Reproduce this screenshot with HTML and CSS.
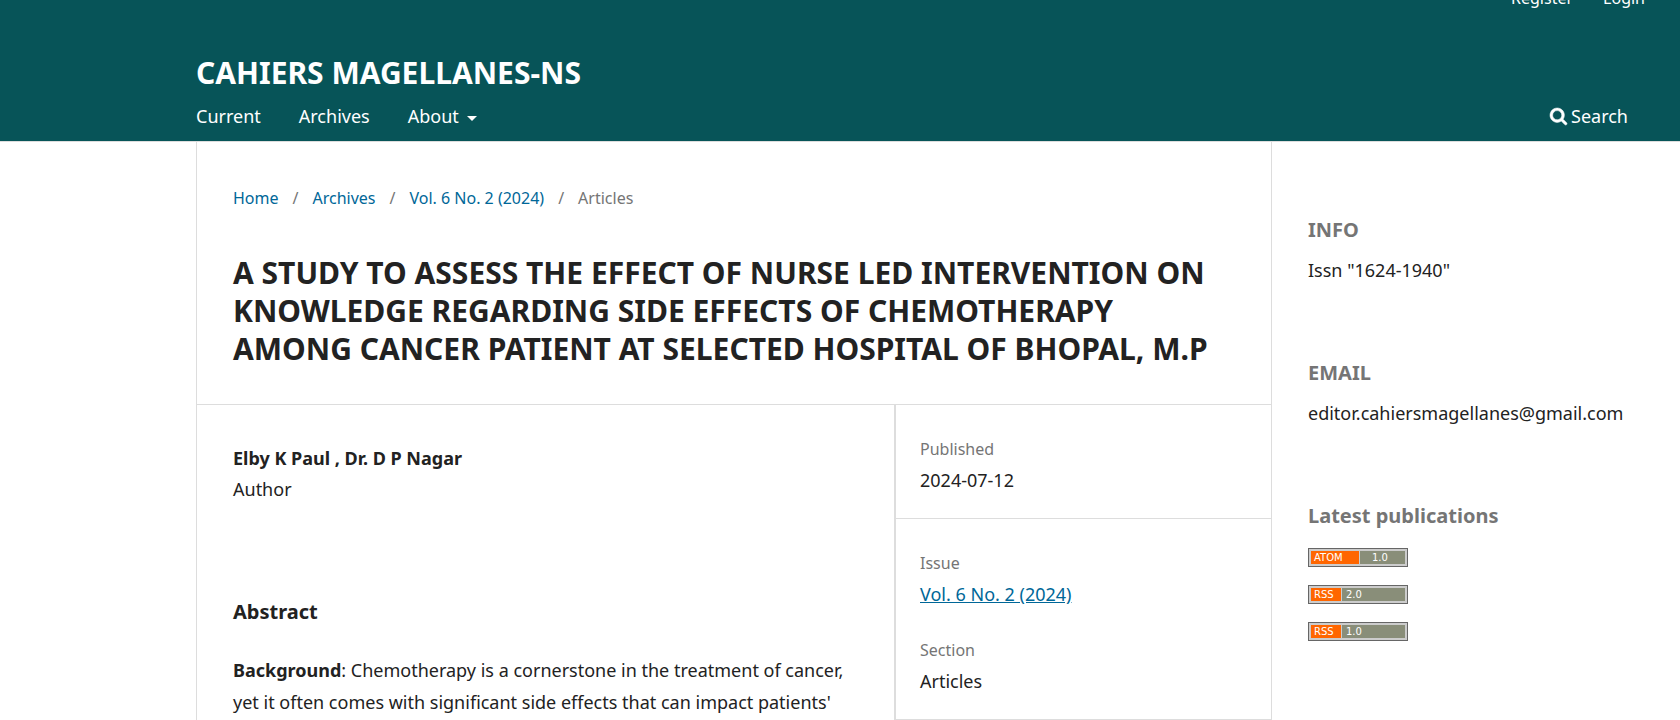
FILE: index.html
```html
<!DOCTYPE html>
<html lang="en">
<head>
<meta charset="utf-8">
<meta name="viewport" content="width=device-width, initial-scale=1">
<title>Cahiers Magellanes-NS</title>
<link rel="stylesheet" href="styles.css">
</head>
<body>
<header class="site-header">
  <nav class="user-nav" aria-label="User">
    <a href="#">Register</a>
    <a href="#">Login</a>
  </nav>
  <div class="site-name"><a href="#">CAHIERS MAGELLANES-NS</a></div>
  <div class="nav-row">
    <nav class="primary-nav" aria-label="Site">
      <a href="#">Current</a>
      <a href="#">Archives</a>
      <a href="#" class="has-menu">About</a>
    </nav>
    <a href="#" class="search-link">
      <svg class="search-icon" viewBox="0 0 1664 1664" aria-hidden="true"><path fill="currentColor" stroke="currentColor" stroke-width="50" d="M1152 704q0-185-131.500-316.500T704 256 387.500 387.500 256 704t131.500 316.500T704 1152t316.500-131.500T1152 704zm512 832q0 52-38 90t-90 38q-54 0-90-38l-343-342q-179 124-399 124-143 0-273.500-55.500t-225-150-150-225T0 704t55.500-273.500 150-225 225-150T704 0t273.500 55.500 225 150 150 225T1408 704q0 220-124 399l343 343q37 37 37 90z"/></svg>
      Search
    </a>
  </div>
</header>
<div class="content">
  <main class="article">
    <div class="article-head">
      <nav class="breadcrumbs" aria-label="Breadcrumb">
        <a href="#">Home</a><span>/</span><a href="#">Archives</a><span>/</span><a href="#">Vol. 6 No. 2 (2024)</a><span>/</span><span>Articles</span>
      </nav>
      <h1>A STUDY TO ASSESS THE EFFECT OF NURSE LED INTERVENTION ON KNOWLEDGE REGARDING SIDE EFFECTS OF CHEMOTHERAPY AMONG CANCER PATIENT AT SELECTED HOSPITAL OF BHOPAL, M.P</h1>
    </div>
    <div class="article-row">
      <div class="article-main">
        <div class="authors">
          <strong>Elby K Paul , Dr. D P Nagar</strong>
          <span>Author</span>
        </div>
        <section class="abstract">
          <h2>Abstract</h2>
          <p><strong>Background</strong>: Chemotherapy is a cornerstone in the treatment of cancer, yet it often comes with significant side effects that can impact patients'</p>
        </section>
      </div>
      <div class="details">
        <section class="detail-box">
          <div class="detail">
            <h2>Published</h2>
            <div>2024-07-12</div>
          </div>
        </section>
        <section class="detail-box">
          <div class="detail">
            <h2>Issue</h2>
            <a href="#">Vol. 6 No. 2 (2024)</a>
          </div>
          <div class="detail">
            <h2>Section</h2>
            <div>Articles</div>
          </div>
        </section>
      </div>
    </div>
  </main>
  <aside class="sidebar">
    <section class="block">
      <h2>INFO</h2>
      <p>Issn "1624-1940"</p>
    </section>
    <section class="block">
      <h2>EMAIL</h2>
      <p>editor.cahiersmagellanes@gmail.com</p>
    </section>
    <section class="block">
      <h2>Latest publications</h2>
      <div class="feeds">
        <a href="#" class="feed feed-atom"><span class="feed-type">ATOM</span><span class="feed-version">1.0</span></a>
        <a href="#" class="feed"><span class="feed-type">RSS</span><span class="feed-version">2.0</span></a>
        <a href="#" class="feed"><span class="feed-type">RSS</span><span class="feed-version">1.0</span></a>
      </div>
    </section>
  </aside>
</div>
</body>
</html>
```
FILE: styles.css
```css
* {
  box-sizing: border-box;
}

body {
  margin: 0;
  background: #fff;
  color: #222;
  font-family: "Noto Sans", "Open Sans", sans-serif;
  font-size: 18px;
  line-height: 32px;
  overflow: hidden;
}

h1, h2, p {
  margin: 0;
}

a {
  color: #006798;
}

.site-header {
  padding: 0 52px 9px 196px;
  background: #075458;
  border-bottom: 1px solid #ddd;
  overflow: hidden;
}

.site-header a {
  color: #fff;
  text-decoration: none;
}

.user-nav {
  display: flex;
  justify-content: flex-end;
  gap: 30px;
  margin: -18px -17px 0 0;
  font-size: 16px;
  line-height: 32px;
}

.site-name {
  margin-top: 40px;
  font-size: 30px;
  font-weight: 700;
  line-height: 38px;
}

.nav-row {
  display: flex;
  justify-content: space-between;
  margin-top: 8px;
}

.primary-nav {
  display: flex;
  gap: 38px;
}

.has-menu::after {
  content: "";
  display: inline-block;
  margin-left: 8px;
  border: 5px solid transparent;
  border-top-color: currentColor;
  border-bottom: 0;
  vertical-align: 2px;
}

.search-link {
  display: flex;
  align-items: center;
  gap: 4px;
}

.search-icon {
  width: 17px;
  height: 17px;
  overflow: visible;
}

.content {
  display: flex;
  padding-left: 196px;
}

.article {
  flex: 1;
  border: 1px solid #ddd;
  border-top: 0;
}

.article-head {
  padding: 40px 36px 36px;
}

.breadcrumbs {
  font-size: 16px;
}

.breadcrumbs a {
  text-decoration: none;
}

.breadcrumbs span {
  color: #757575;
}

.breadcrumbs a + span {
  padding: 0 14px;
}

h1 {
  margin-top: 40px;
  font-size: 30px;
  line-height: 38px;
}

.article-row {
  display: flex;
  border-top: 1px solid #ddd;
}

.article-main {
  flex: 1;
  padding: 38px 36px 0;
  border-right: 1px solid #ddd;
}

.authors {
  display: flex;
  flex-direction: column;
  line-height: 31px;
}

.abstract h2 {
  margin: 91px 0 26px;
  font-size: 20px;
}

.details {
  width: 376px;
  flex: none;
  border-left: 1px solid #ddd;
  line-height: 31px;
}

.detail-box {
  padding: 29px 24px 22px;
  border-bottom: 1px solid #ddd;
}

.detail + .detail {
  margin-top: 25px;
}

.detail h2 {
  color: #757575;
  font-size: 16px;
  font-weight: 400;
}

.sidebar {
  width: 408px;
  flex: none;
  padding: 72px 36px 0;
}

.block {
  margin-bottom: 71px;
}

.block h2 {
  margin-bottom: 8px;
  color: #757575;
  font-size: 20px;
}

.feeds {
  display: flex;
  flex-direction: column;
  align-items: flex-start;
  gap: 18px;
  margin-top: 16px;
}

.feed {
  display: flex;
  gap: 1px;
  width: 100px;
  height: 19px;
  padding: 2px;
  border: 1px solid #666;
  background: #ccc;
  color: #fff;
  font: 10px/13px "DejaVu Sans", sans-serif;
  text-decoration: none;
}

.feed-type {
  width: 30px;
  padding-left: 3px;
  background: #f60;
}

.feed-version {
  flex: 1;
  padding-left: 4px;
  background: #898e79;
}

.feed-atom .feed-type {
  width: 48px;
}

.feed-atom .feed-version {
  padding-left: 12px;
}
```
